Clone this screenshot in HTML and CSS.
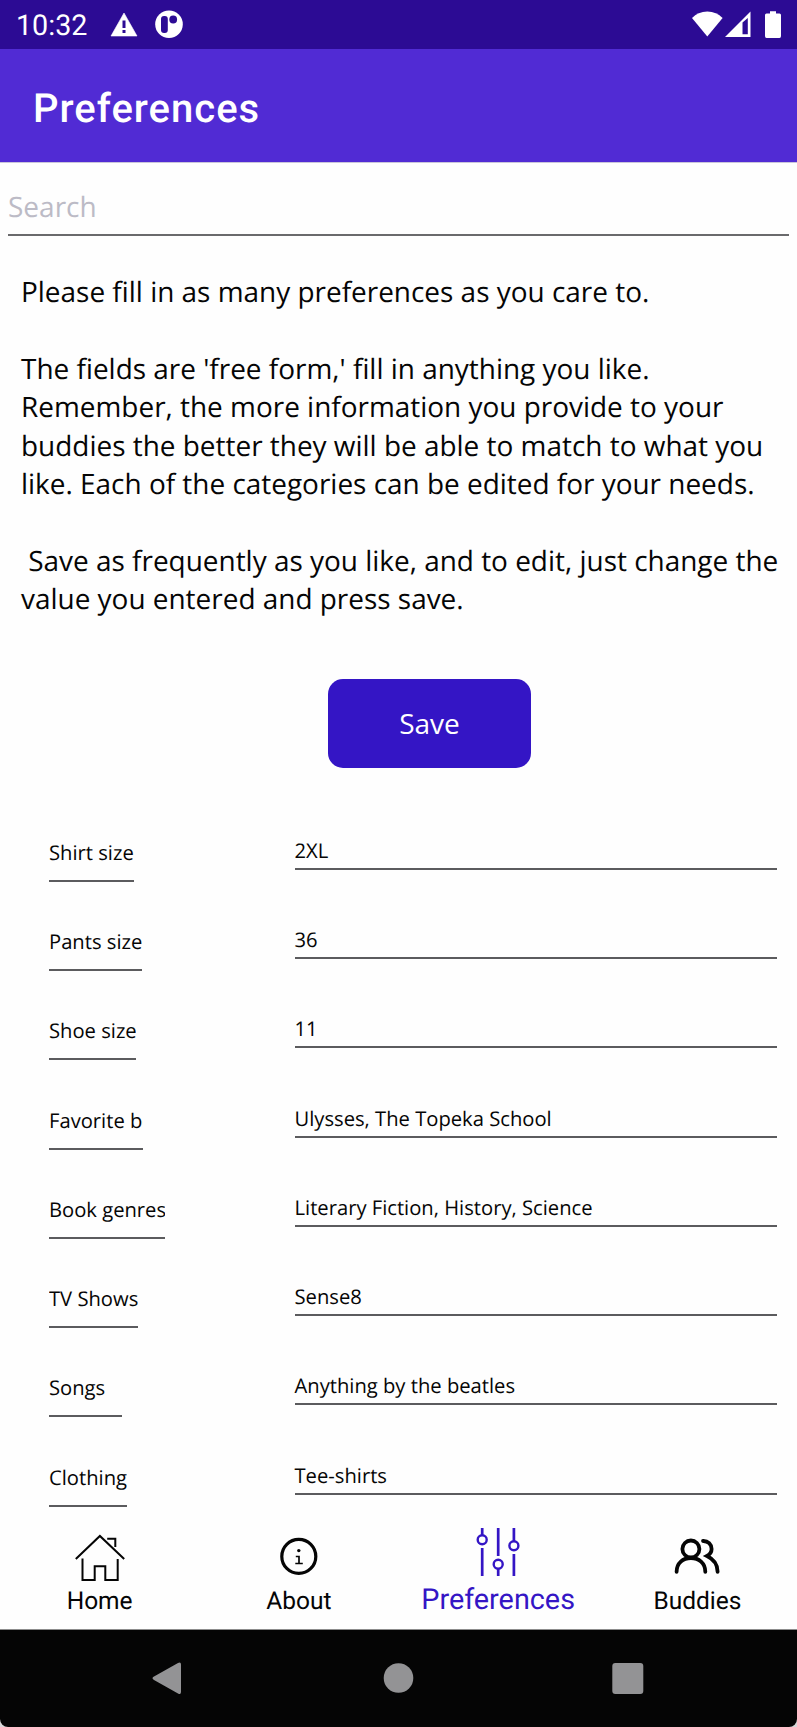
FILE: index.html
```html
<!DOCTYPE html>
<html lang="en">
<head>
<meta charset="utf-8">
<title>Preferences</title>
<link rel="stylesheet" href="styles.css">
</head>
<body>
<div class="phone">
  <header class="status">
    <span class="clock">10:32</span>
    <svg class="status-warn" width="28" height="26" viewBox="0 0 28 26"><path d="M14 1L27 24H1Z" fill="#fff" stroke="#fff" stroke-width=".6" stroke-linejoin="round"/><path d="M14 8.500v7.500M14 18v3" stroke="#2c0b94" stroke-width="3"/></svg>
    <svg class="status-app" width="28" height="28" viewBox="0 0 28 28"><circle cx="14" cy="14.200" r="13.800" fill="#fff"/><rect x="6" y="6" width="6.800" height="17" rx="3" fill="#2c0b94"/><circle cx="18.200" cy="9.500" r="3.900" fill="#2c0b94"/></svg>
    <span class="spacer"></span>
    <svg width="86" height="30" viewBox="0 0 86 30" fill="#fff"><path d="M0 8Q6 1.500 15.300 1.500T30.600 8L15.300 26.500Z"/><path fill-rule="evenodd" d="M33 27L58.500 1.500V27ZM50.500 12.500V24.300H55.800V8Z"/><path d="M78 1.200h6v2.400h3.500q1.500 0 1.500 1.500V26q0 2-1.500 2h-13q-1.500 0-1.500-2V5.100q0-1.500 1.500-1.500H78Z"/></svg>
  </header>
  <div class="appbar"><h1>Preferences</h1></div>
  <div class="search">Search</div>
  <main>
    <p class="intro">Please fill in as many preferences as you care to.

The fields are 'free form,' fill in anything you like.
Remember, the more information you provide to your
buddies the better they will be able to match to what you
like. Each of the categories can be edited for your needs.

 Save as frequently as you like, and to edit, just change the
value you entered and press save.</p>
    <button class="save">Save</button>
    <div class="fields">
      <div class="row"><div class="label w-shirt">Shirt size</div><div class="value">2XL</div></div>
      <div class="row"><div class="label w-pants">Pants size</div><div class="value">36</div></div>
      <div class="row"><div class="label w-shoe">Shoe size</div><div class="value">11</div></div>
      <div class="row"><div class="label w-book">Favorite book</div><div class="value">Ulysses, The Topeka School</div></div>
      <div class="row"><div class="label w-genre">Book genres</div><div class="value">Literary Fiction, History, Science</div></div>
      <div class="row"><div class="label w-tv">TV Shows</div><div class="value">Sense8</div></div>
      <div class="row"><div class="label w-songs">Songs</div><div class="value">Anything by the beatles</div></div>
      <div class="row"><div class="label w-cloth">Clothing</div><div class="value">Tee-shirts</div></div>
    </div>
  </main>
  <nav class="tabs">
    <div class="tab">
      <svg width="56" height="60" viewBox="0 0 56 60" fill="none" stroke="#050505" stroke-width="2"><path d="M3.800 35L27.900 12L52.200 35M35.200 14.800H43.300V23M10.500 34.500V56H22.700V42.300H33.300V56H45.700V35"/></svg>
      <span>Home</span>
    </div>
    <div class="tab">
      <svg width="56" height="60" viewBox="0 0 56 60" fill="none" stroke="#050505"><circle cx="27.800" cy="32.400" r="17" stroke-width="3.200"/><path d="M24.800 32.500H28V39.300M24.300 39.500H31.800" stroke-width="1.700"/><circle cx="27.800" cy="26.600" r="1.700" fill="#050505" stroke="none"/></svg>
      <span>About</span>
    </div>
    <div class="tab active">
      <svg width="56" height="60" viewBox="0 0 56 60" fill="none" stroke="#3415c5" stroke-width="2.700"><path d="M12.200 4V11M12.200 24V52M28.200 4V32M28.200 45V52M43.900 4V17M43.900 30V52"/><g stroke-width="2.400"><circle cx="12.200" cy="15.700" r="4.500"/><circle cx="28.200" cy="40.200" r="4.500"/><circle cx="43.900" cy="21.700" r="4.500"/></g></svg>
      <span>Preferences</span>
    </div>
    <div class="tab">
      <svg width="56" height="60" viewBox="0 0 56 60" fill="none" stroke="#050505" stroke-width="3.800" stroke-linecap="round"><circle cx="21.900" cy="25" r="8.500"/><path d="M7.600 47.800C7.600 39 14 34 21.900 34S36.300 39 36.300 47.800M34 17C39 16.800 42.600 20.500 42.600 25Q42.600 29.500 38 32Q48.600 37 48.600 47.800"/></svg>
      <span>Buddies</span>
    </div>
  </nav>
  <footer class="sysnav">
    <svg width="797" height="97" viewBox="0 0 797 97" fill="#939395"><path d="M154 37.500L178 24Q181 22.500 181 25.500V53Q181 56 178 54.500L154 41Q151 39 154 37.500Z"/><circle cx="398.500" cy="39" r="14.800"/><rect x="612.300" y="24" width="31" height="31" rx="3"/></svg>
  </footer>
</div>
</body>
</html>
```
FILE: styles.css
```css
* { box-sizing: border-box; }
body { margin: 0; background: #d8d8da; font-family: "Open Sans", "Noto Sans", sans-serif; color: #050505; text-rendering: geometricPrecision; }
.phone { width: 797px; height: 1727px; display: flex; flex-direction: column; background: #fefefe; overflow: hidden; border-radius: 0 0 8px 8px; }

.status { height: 49px; flex: none; background: #2c0b94; display: flex; align-items: flex-start; padding: 10px 15px 0 16px; }
.status svg { flex: none; overflow: visible; }
.status > svg:last-child { margin-right: 4px; }
.clock { width: 94px; padding-top: 1px; font: 28.700px/30px Roboto, sans-serif; color: #fff; }
.status-warn { margin-top: 2px; }
.status-app { margin-left: 17px; }
.spacer { flex: 1; }

.appbar { height: 114px; flex: none; background: #512bd4; border-bottom: 1px solid #c9c5da; display: flex; align-items: center; padding: 6px 33px 0; }
h1 { margin: 0; font: 500 40px/48px Roboto, sans-serif; color: #fff; letter-spacing: 1px; }

.search { height: 73px; flex: none; margin: 0 8px; border-bottom: 2px solid #6a6a6c; padding-top: 24px; font-size: 28px; line-height: 40px; color: #bcbbc6; }

main { height: 1275px; flex: 1; min-height: 0; overflow: hidden; display: flex; flex-direction: column; }
.intro { margin: 37px 0 0 21px; white-space: pre; font-size: 27.950px; line-height: 38.400px; }
.save { width: 203px; height: 89px; flex: none; margin: 60px 0 0 328px; border: 0; border-radius: 15px; background: #3415c5; color: #fff; font: 28px/38px "Open Sans", sans-serif; padding: 0 0 1px; }

.fields { margin: 64px 20px 0 49px; display: grid; grid-auto-rows: 89.300px; font-size: 20.200px; line-height: 28px; }
.row { display: grid; grid-template-columns: 245.500px 1fr; align-items: start; white-space: nowrap; }
.label, .value { border-bottom: 2px solid #5b5b5e; }
.label { height: 50px; padding-top: 6px; overflow: hidden; }
.value { height: 38px; padding-top: 4px; }
.w-shirt { width: 85px; }
.w-pants { width: 93px; }
.w-shoe { width: 87px; }
.w-book { width: 94px; }
.w-genre { width: 116px; }
.w-tv { width: 88.500px; }
.w-songs { width: 73px; }
.w-cloth { width: 78px; }

.tabs { height: 117px; flex: none; padding-top: 12px; display: grid; grid-template-columns: repeat(4, 1fr); background: #fefefe; }
.tab { display: flex; flex-direction: column; align-items: center; font: 24.500px/34px Roboto, sans-serif; }
.tab.active { font-size: 28.800px; line-height: 32px; color: #3415c5; }

.sysnav { height: 98px; flex: none; background: #050505; border-top: 1px solid #8c8c8c; }
.sysnav svg { display: block; margin-top: 9px; }
```
